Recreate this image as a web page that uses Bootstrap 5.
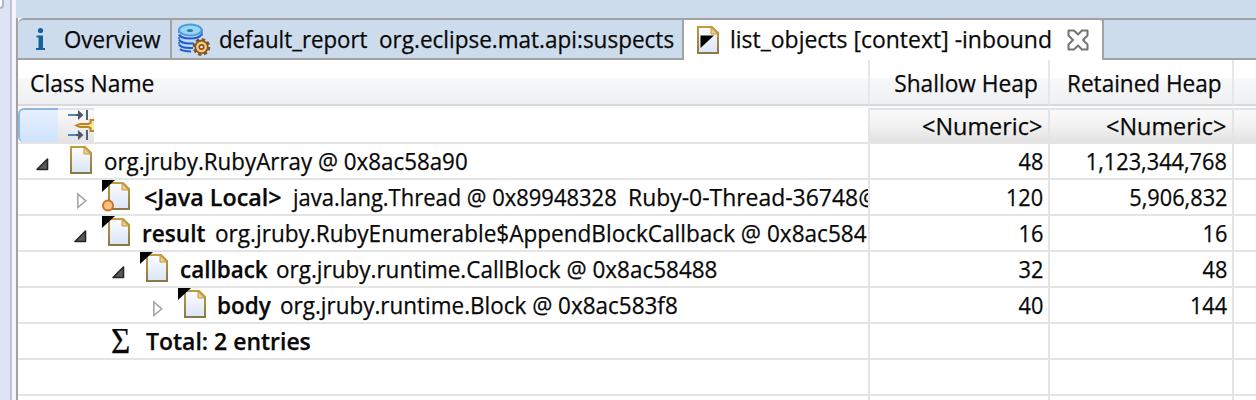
<!DOCTYPE html>
<html lang="en">
<head>
<meta charset="utf-8">
<title>Memory Analyzer</title>
<link rel="stylesheet" href="https://cdn.jsdelivr.net/npm/bootstrap@5.3.0/dist/css/bootstrap.min.css">
<style>
body{width:1256px;height:400px;overflow:hidden;background:#fff;color:#080808;font-family:"Open Sans","Noto Sans",sans-serif;font-size:24px;line-height:34px}
svg{display:block;flex:none}
/* left sash and editor border */
.sash{width:16px;background:linear-gradient(90deg,#dfe4f5 10px,#b9bed2 10px,#c3c8da 12px,#f5f6fb 12px)}
.knob{width:4px;height:9px;background:#fff;border:solid #b4b8c6;border-width:0 2px 2px 0;border-bottom-right-radius:4px}
.band{height:18px;flex:none;background:#ccdcec}
.edge{width:2px;background:#a2a2a2}
.tabbar{height:42px;background:#ccdcec;border-top:2px solid #a2a2a2;border-top-left-radius:6px}
.tab{height:40px;line-height:38px;border-bottom:2px solid #a2a2a2}
.tab-a{width:154px;border-right:2px solid #a2a2a2;padding-left:16px}
.tab-b{width:512px;border-right:2px solid #a2a2a2;padding-left:5px}
.tab-c{width:418px;background:#fff;border-bottom:0;padding-left:13px;border-top-right-radius:4px}
.tab-rest{border-left:2px solid #a2a2a2}
/* table */
.line{display:grid;grid-template-columns:852px 180px 184px 1fr;height:36px}
.line>div{border-right:2px solid #e4e4e4;border-bottom:2px solid #e4e4e4;overflow:hidden;min-width:0}
.line>div:last-child{border-right:0}
.heads{height:46px;line-height:46px}
.heads>div{background:linear-gradient(#fff 18px,#f7f8fa 18px,#eff0f2);border-bottom-color:#d8d8d8;border-right-color:#e6e7e9}
.filters{height:38px;border-top:2px solid #fafafa}
.filters .nf{background:linear-gradient(#fafafa,#f1f1f1 50%,#e3e3e3);border-top:2px solid #e2e2e2;line-height:32px}
.sel{width:40px;height:34px;background:linear-gradient(#e6f0fe,#cfe3fd);border:solid #8cb4e6;border-width:2px 0 0 2px;border-radius:6px 0 0 5px}
.fico{width:36px;height:34px;background:linear-gradient(#fafafa,#e3e3e3);border-top:2px solid #e2e2e2}
/* tree levels */
.lv0{padding-left:17px}.lv1{padding-left:55px}.lv2{padding-left:93px}.lv3{padding-left:131px}
.tw{margin-right:15px}
.run{display:block;flex:none;white-space:pre;transform-origin:0 50%;-webkit-text-stroke:.25px #080808}
.run.r{transform-origin:100% 50%;margin-left:auto;width:max-content}
.b6{font-weight:600}
.t1{transform:scaleX(.928);margin-left:16px}
.t2{transform:scaleX(.927);width:160px;margin-left:8px}
.t3{transform:scaleX(.938)}
.t4{transform:scaleX(.957);width:337px;margin-left:11px}
.h1x{transform:scaleX(.952);margin-left:12px}
.h2x{transform:scaleX(.946);margin-right:10px!important}
.h3x{transform:scaleX(.939);margin-right:10px!important}
.fx{transform:scaleX(.975);margin-right:6px!important}
.nx{transform:scaleX(.905);margin-right:5px!important}
.o1{transform:scaleX(.931);margin-left:10px}
.o2{transform:scaleX(.971);width:149px;margin-left:12px}
.o2b{transform:scaleX(.915);width:335px}
.o2c{transform:scaleX(.955)}
.o3{transform:scaleX(.942);width:73px;margin-left:10px}
.o3b{transform:scaleX(.94)}
.o4{transform:scaleX(.935);width:96px;margin-left:10px}
.o4b{transform:scaleX(.937)}
.o5{transform:scaleX(.938);width:63px;margin-left:9px}
.o5b{transform:scaleX(.936)}
.o6{transform:scaleX(.957);margin-left:12px}
.sigma{font:36px/34px "Liberation Serif",serif;width:23px;transform:scaleX(.92)}
</style>
</head>
<body>
<svg width="0" height="0" class="position-absolute">
<defs>
<linearGradient id="pg" x1="0" y1="0" x2="0" y2="1"><stop offset="0" stop-color="#fcfdff"/><stop offset="1" stop-color="#dbe5f6"/></linearGradient>
<linearGradient id="pb" x1="0" y1="0" x2="0" y2="1"><stop offset="0" stop-color="#c49a3e"/><stop offset="1" stop-color="#8a7a46"/></linearGradient>
<symbol id="page" viewBox="0 0 22 28"><path d="M1 1H15L21 7V27H1Z" fill="url(#pg)" stroke="url(#pb)" stroke-width="2"/><path d="M14 1.5V8H20.5Z" fill="#ecd08c" stroke="#c49a3e" stroke-width="1"/></symbol>
<symbol id="open" viewBox="0 0 14 34"><path d="M12.500 15V25.500H2Z" fill="#5a5a5a" stroke="#262626" stroke-width="1.600" stroke-linejoin="round"/></symbol>
<symbol id="shut" viewBox="0 0 14 34"><path d="M4.800 14V27.500L12.800 20.800Z" fill="#fff" stroke="#a6a6a6" stroke-width="1.600"/></symbol>
<symbol id="ref" viewBox="0 0 30 34"><use href="#page" x="6" y="2" width="22" height="28"/><path d="M0 0H13L0 12Z" fill="#000"/></symbol>
</defs>
</svg>
<div class="d-flex h-100">
  <div class="sash flex-shrink-0"><div class="knob"></div></div>
  <div class="flex-grow-1 d-flex flex-column">
    <div class="band"></div>
    <div class="d-flex flex-grow-1">
      <div class="edge"></div>
      <div class="flex-grow-1">
        <div class="tabbar d-flex">
          <div class="tab tab-a d-flex">
            <svg width="14" height="38" viewBox="0 0 14 38" fill="#14619f"><circle cx="6.500" cy="10.500" r="2.600"/><path d="M2.500 15.500H9V28H11V30H2V28H4.500V17.500H2.500Z"/></svg>
            <span class="run t1">Overview</span>
          </div>
          <div class="tab tab-b d-flex">
            <svg width="34" height="38" viewBox="0 0 34 38"><path d="M2 9V26Q3 31.500 12 31.500H18L25 20V9Z" fill="#b9dcf8"/><path d="M2 14.500Q4 18.500 13 18.500T24.500 14.500M2 19.500Q4 23.500 13 23.500H17M2 24.500Q4 28 13 28H16M3 29Q6 31.500 14 31.500" fill="none" stroke="#2459d0" stroke-width="2.200"/><path d="M2 9V13M2 17V19M2 22V24M24.800 9V16" stroke="#3b82dc" stroke-width="2"/><ellipse cx="13.300" cy="10" rx="11.300" ry="5.500" fill="#9ad6f3" stroke="#4e9cdf" stroke-width="2"/><ellipse cx="13" cy="10.500" rx="3" ry="1.500" fill="#277fae"/><circle cx="24.500" cy="27" r="7.400" fill="none" stroke="#85502c" stroke-width="2.800" stroke-dasharray="3.300 2.511"/><circle cx="24.500" cy="27" r="6.300" fill="#f7ce67" stroke="#85502c" stroke-width="1.700"/><circle cx="24.500" cy="27" r="2.200" fill="#e5edfa" stroke="#85502c" stroke-width="1.700"/></svg>
            <span class="run t2">default_report</span><span class="run t3">org.eclipse.mat.api:suspects</span>
          </div>
          <div class="tab tab-c d-flex">
            <svg width="22" height="38" viewBox="0 0 22 38"><use href="#page" x="0" y="6" width="22" height="28"/><path d="M3.500 15.500H17L3.500 28Z" fill="#000"/></svg>
            <span class="run t4">list_objects [context] -inbound</span>
            <svg width="22" height="38" viewBox="0 0 22 38"><path d="M1.500 10.500H7L11 14.500L15 10.500H20.500V15.500L16 20L20.500 24.500V29.500H15L11 25.500L7 29.500H1.500V24.500L6 20L1.500 15.500Z" fill="#fff" stroke="#737373" stroke-width="2" stroke-linejoin="round"/></svg>
          </div>
          <div class="tab tab-rest flex-grow-1"></div>
        </div>
        <div class="line heads">
          <div><span class="run h1x">Class Name</span></div>
          <div><span class="run r h2x">Shallow Heap</span></div>
          <div><span class="run r h3x">Retained Heap</span></div>
          <div></div>
        </div>
        <div class="line filters">
          <div class="d-flex"><div class="sel"></div><div class="fico"><svg width="36" height="32" viewBox="0 0 36 32"><g stroke-width="2"><path d="M10 5H20M10 25H20" stroke="#4c87b5"/><path d="M18 5H24M18 25H24" stroke="#4b5765"/><path d="M29 0V10M29 20V30" stroke="#53607a"/></g><path d="M20 0L25.500 5L20 10ZM20 20L25.500 25L20 30Z" fill="#4b5765"/><path d="M36 10H32.500V13L30 14H22L18.500 15.500L22 17H30L32.500 18V21H36" fill="#fae5a7" stroke="#bb8424" stroke-width="2"/></svg></div></div>
          <div class="nf"><span class="run r fx">&lt;Numeric&gt;</span></div>
          <div class="nf"><span class="run r fx">&lt;Numeric&gt;</span></div>
          <div class="nf"></div>
        </div>
        <div class="line">
          <div class="d-flex lv0"><svg class="tw" width="14" height="34"><use href="#open"/></svg><svg width="30" height="34"><use href="#page" x="6" y="2" width="22" height="28"/></svg><span class="run o1">org.jruby.RubyArray @ 0x8ac58a90</span></div>
          <div><span class="run r nx">48</span></div><div><span class="run r nx">1,123,344,768</span></div><div></div>
        </div>
        <div class="line">
          <div class="d-flex lv1"><svg class="tw" width="14" height="34"><use href="#shut"/></svg><svg width="30" height="34"><use href="#ref"/><circle cx="6" cy="25.500" r="5" fill="#fdc37c" stroke="#cc702b" stroke-width="2"/></svg><span class="run b6 o2">&lt;Java Local&gt;</span><span class="run o2b">java.lang.Thread @ 0x89948328</span><span class="run o2c">Ruby-0-Thread-36748@</span></div>
          <div><span class="run r nx">120</span></div><div><span class="run r nx">5,906,832</span></div><div></div>
        </div>
        <div class="line">
          <div class="d-flex lv1"><svg class="tw" width="14" height="34"><use href="#open"/></svg><svg width="30" height="34"><use href="#ref"/></svg><span class="run b6 o3">result</span><span class="run o3b">org.jruby.RubyEnumerable$AppendBlockCallback @ 0x8ac584</span></div>
          <div><span class="run r nx">16</span></div><div><span class="run r nx">16</span></div><div></div>
        </div>
        <div class="line">
          <div class="d-flex lv2"><svg class="tw" width="14" height="34"><use href="#open"/></svg><svg width="30" height="34"><use href="#ref"/></svg><span class="run b6 o4">callback</span><span class="run o4b">org.jruby.runtime.CallBlock @ 0x8ac58488</span></div>
          <div><span class="run r nx">32</span></div><div><span class="run r nx">48</span></div><div></div>
        </div>
        <div class="line">
          <div class="d-flex lv3"><svg class="tw" width="14" height="34"><use href="#shut"/></svg><svg width="30" height="34"><use href="#ref"/></svg><span class="run b6 o5">body</span><span class="run o5b">org.jruby.runtime.Block @ 0x8ac583f8</span></div>
          <div><span class="run r nx">40</span></div><div><span class="run r nx">144</span></div><div></div>
        </div>
        <div class="line">
          <div class="d-flex lv2"><span class="run sigma">Σ</span><span class="run b6 o6">Total: 2 entries</span></div>
          <div></div><div></div><div></div>
        </div>
        <div class="line"><div></div><div></div><div></div><div></div></div>
        <div class="line"><div></div><div></div><div></div><div></div></div>
      </div>
    </div>
  </div>
</div>
<script src="https://cdn.jsdelivr.net/npm/bootstrap@5.3.0/dist/js/bootstrap.bundle.min.js"></script>
</body>
</html>
